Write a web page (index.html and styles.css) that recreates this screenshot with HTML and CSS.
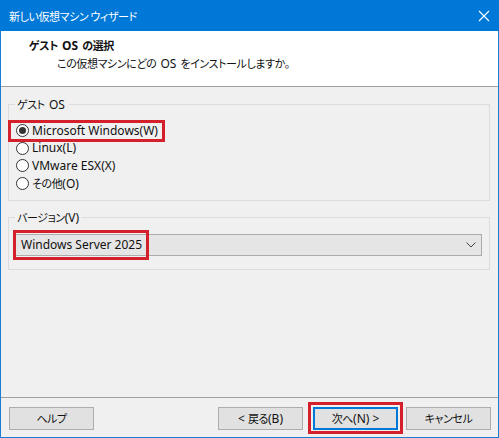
FILE: index.html
```html
<!DOCTYPE html>
<html lang="ja">
<head>
<meta charset="utf-8">
<title>新しい仮想マシン ウィザード</title>
<link rel="stylesheet" href="styles.css">
</head>
<body>
<div class="window">
  <div class="titlebar">
    <span class="title jp">新しい仮想マシン ウィザード</span>
    <svg class="close" width="12" height="12" viewBox="0 0 12 12"><path d="M1 1 L11 11 M11 1 L1 11" stroke="#fff" stroke-width="1.1" fill="none"/></svg>
  </div>
  <div class="header">
    <div class="h-title jp">ゲスト <span class="lat">OS</span> の選択</div>
    <div class="h-sub jp">この仮想マシンにどの <span class="lat">OS</span> をインストールしますか。</div>
  </div>
  <div class="content">
    <fieldset class="group group-os">
      <legend class="jp">ゲスト <span class="lat">OS</span></legend>
      <div class="radios">
        <div class="radio checked hl-row"><span class="dot"></span><span class="lbl">Microsoft Windows(W)</span></div>
        <div class="radio"><span class="dot"></span><span class="lbl">Linux(L)</span></div>
        <div class="radio"><span class="dot"></span><span class="lbl">VMware ESX(X)</span></div>
        <div class="radio"><span class="dot"></span><span class="lbl"><span class="jp">その他</span>(O)</span></div>
      </div>
    </fieldset>
    <fieldset class="group group-ver">
      <legend><span class="jp">バージョン</span>(V)</legend>
      <div class="combo">
        <span class="combo-text">Windows Server 2025</span>
        <svg class="chev" width="10" height="6" viewBox="0 0 10 6"><path d="M0.5 0.5 L5 5 L9.5 0.5" stroke="#444" stroke-width="1" fill="none"/></svg>
        <span class="hl-combo"></span>
      </div>
    </fieldset>
    <div class="spacer"></div>
    <div class="footer">
      <button class="btn"><span class="jp">ヘルプ</span></button>
      <div class="grow"></div>
      <button class="btn">&lt; <span class="jp">戻る</span>(B)</button>
      <button class="btn btn-next"><span class="jp">次へ</span>(N) &gt;<span class="hl-next"></span></button>
      <button class="btn btn-cancel"><span class="jp">キャンセル</span></button>
    </div>
  </div>
</div>
</body>
</html>
```

FILE: styles.css
```css
* { box-sizing: border-box; }
html, body { margin: 0; padding: 0; }
body {
  width: 499px;
  height: 438px;
  overflow: hidden;
  font-family: "Segoe UI", "Noto Sans", "Noto Sans CJK JP", sans-serif;
  font-size: 12px;
  color: #111;
  background: #f0f0f0;
}
.jp {
  font-family: "Noto Sans CJK JP", sans-serif;
  font-feature-settings: "palt";
  font-size: 11px;
  letter-spacing: -0.4px;
}
.lat {
  font-family: "Noto Sans", sans-serif;
  font-size: 12px;
  letter-spacing: 0;
  margin: 0 2px;
}
.window {
  width: 499px;
  height: 438px;
  display: flex;
  flex-direction: column;
  border: 1px solid #1a7fd4;
  border-top: none;
  background: #f0f0f0;
}
.titlebar {
  height: 31px;
  margin: 0 -1px;
  background: #0078d7;
  color: #fff;
  display: flex;
  align-items: center;
  padding-left: 9px;
  padding-right: 9px;
  flex-shrink: 0;
}
.title { line-height: 16px; flex: 1; }
.close { display: block; }
.header {
  height: 56px;
  background: #fff;
  border-bottom: 1px solid #a0a0a0;
  flex-shrink: 0;
  padding-top: 6px;
}
.h-title {
  font-weight: bold;
  padding-left: 28px;
  line-height: 16px;
}
.h-sub {
  padding-left: 56px;
  margin-top: 1px;
  line-height: 16px;
}
.content {
  flex: 1;
  display: flex;
  flex-direction: column;
  padding-top: 9px;
}
.group {
  margin: 0 8px 0 7px;
  border: 1px solid #dcdcdc;
  padding: 0 7px 0 6px;
  min-width: 0;
}
.group legend {
  padding: 0 2px;
  line-height: 16px;
}
.group-os { padding-bottom: 8px; }
.radios { padding-top: 9px; margin-left: 1px; }
.radio {
  height: 17.5px;
  display: flex;
  align-items: center;
  position: relative;
}
.radio .dot {
  width: 13px;
  height: 13px;
  border: 1px solid #333;
  border-radius: 50%;
  background: #fff;
  flex-shrink: 0;
  display: flex;
  align-items: center;
  justify-content: center;
}
.radio.checked .dot::after {
  content: "";
  width: 7px;
  height: 7px;
  border-radius: 50%;
  background: #333;
}
.radio .lbl { margin-left: 3px; line-height: 16px; }
.hl-row .lbl { position: relative; }
.hl-row .lbl::after {
  content: "";
  position: absolute;
  left: -24px;
  right: -7px;
  top: -3px;
  bottom: -3px;
  border: 3px solid #d4202a;
}
.group-ver { margin-top: 8px; padding-bottom: 13px; }
.combo {
  margin-top: 8px;
  height: 22px;
  border: 1px solid #acacac;
  background: #e5e5e5;
  display: flex;
  align-items: center;
  padding-left: 5px;
  padding-right: 5px;
  position: relative;
}
.combo-text { flex: 1; line-height: 16px; }
.chev { display: block; }
.hl-combo {
  position: absolute;
  left: -3px;
  top: -5px;
  width: 136px;
  height: 30px;
  border: 3px solid #d4202a;
}
.spacer { flex: 1; }
.footer {
  height: 40px;
  border-top: 1px solid #a0a0a0;
  display: flex;
  align-items: flex-start;
  padding: 9px 7px 0 8px;
  flex-shrink: 0;
}
.grow { flex: 1; }
.btn {
  width: 85px;
  height: 23px;
  border: 1px solid #adadad;
  background: #e1e1e1;
  font-family: "Segoe UI", "Noto Sans", "Noto Sans CJK JP", sans-serif;
  font-size: 12px;
  color: #111;
  padding: 0;
  margin: 0;
  line-height: 16px;
  position: relative;
}
.btn-next {
  margin-left: 10px;
  border: 2px solid #0078d7;
}
.btn-cancel { margin-left: 8px; }
.hl-next {
  position: absolute;
  left: -7px;
  right: -7px;
  top: -7px;
  bottom: -6px;
  border: 3px solid #d4202a;
}
```
